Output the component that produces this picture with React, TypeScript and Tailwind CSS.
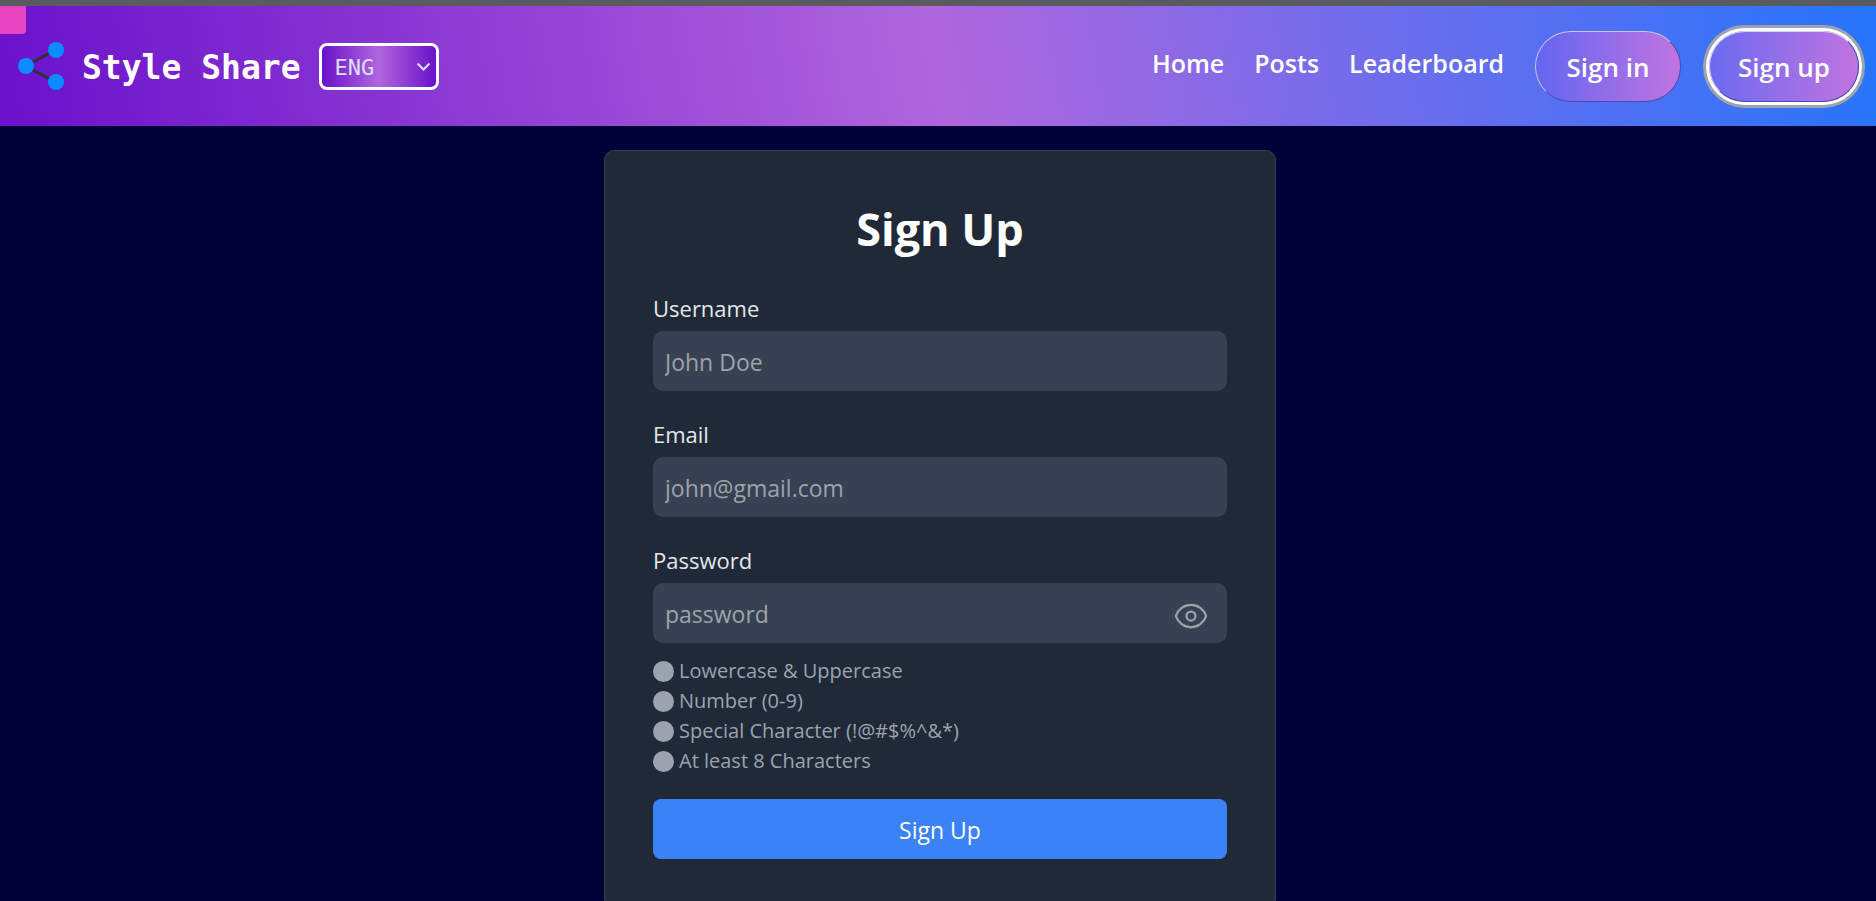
const RULES = [
  "Lowercase & Uppercase",
  "Number (0-9)",
  "Special Character (!@#$%^&*)",
  "At least 8 Characters",
];

function Logo() {
  return (
    <svg width="48" height="50" viewBox="0 0 48 50" fill="none">
      <path d="M8 25 L37 9 M8 25 L37 41" stroke="#2f2f3f" strokeWidth="3" />
      <circle cx="8" cy="25" r="8" fill="#0a8cff" />
      <circle cx="38" cy="9" r="8" fill="#0a8cff" />
      <circle cx="38" cy="41" r="8" fill="#0a8cff" />
    </svg>
  );
}

function EyeIcon() {
  return (
    <svg
      className="absolute right-[18px] top-[15px] text-[#9ca3af]"
      width="36"
      height="36"
      viewBox="0 0 24 24"
      fill="none"
      stroke="currentColor"
      strokeWidth="1.5"
    >
      <path d="M2.036 12.322a1.012 1.012 0 0 1 0-.639C3.423 7.51 7.36 4.5 12 4.5c4.638 0 8.573 3.007 9.963 7.178.07.207.07.431 0 .639C20.577 16.49 16.64 19.5 12 19.5c-4.638 0-8.573-3.007-9.963-7.178Z" />
      <path d="M15 12a3 3 0 1 1-6 0 3 3 0 0 1 6 0Z" />
    </svg>
  );
}

function Field({ label, placeholder }: { label: string; placeholder: string }) {
  return (
    <div className="mb-[29px]">
      <label className="mb-[9px] block text-[22px] leading-[28px] text-[#e5e7eb]">{label}</label>
      <input
        type="text"
        placeholder={placeholder}
        className="h-[60px] w-full rounded-[10px] bg-[#374151] px-3 pt-[2px] text-[23px] text-white outline-none placeholder:text-[#9ca3af]"
      />
    </div>
  );
}

export default function App() {
  return (
    <div className="relative h-screen overflow-hidden bg-[#000038] font-['Open_Sans','Noto_Sans',sans-serif]">
      <div className="h-[6px] bg-[#5a5b60]" />
      <div className="absolute left-0 top-[6px] z-10 h-[28px] w-[26px] rounded-br-[4px] bg-[#e844c0]" />

      <nav className="flex h-[120px] items-center justify-between bg-[linear-gradient(80deg,#6a11cb_0%,#b066dd_50%,#2575fc_100%)] pl-[18px] pr-[17px]">
        <div className="flex items-center">
          <Logo />
          <span className="ml-[16px] pt-[3px] font-['DejaVu_Sans_Mono',monospace] text-[33px] font-bold text-white">Style Share</span>
          <div className="relative ml-[18px]">
            <select className="h-[47px] w-[120px] appearance-none rounded-[8px] border-[3px] border-white bg-[linear-gradient(90deg,#6a11cb,#b066dd,#6a11cb)] pl-[13px] pt-[2px] font-['DejaVu_Sans_Mono',monospace] text-[22px] text-[#dbe0fb] outline-none">
              <option>ENG</option>
            </select>
            <svg className="absolute right-[8px] top-[19px]" width="15" height="9" viewBox="0 0 15 9" fill="none">
              <path d="M1.5 1.5 L7.5 7.5 L13.5 1.5" stroke="#dbe0fb" strokeWidth="2" />
            </svg>
          </div>
        </div>

        <div className="flex items-center">
          <a className="pb-[4px] text-[25px] font-semibold text-white">Home</a>
          <a className="ml-[30px] pb-[4px] text-[25px] font-semibold text-white">Posts</a>
          <a className="ml-[30px] pb-[4px] text-[25px] font-semibold text-white">Leaderboard</a>
          <button className="ml-[31px] h-[71px] w-[146px] rounded-full border border-t-[#c9c4f2] border-l-[#c9c4f2] border-r-[#4a4ab0] border-b-[#4a4ab0] bg-[linear-gradient(90deg,#6366f1,#c074e0)] pt-[3px] text-[26px] font-semibold text-white">
            Sign in
          </button>
          <button className="ml-[28px] h-[71px] w-[150px] rounded-full border border-t-[#d8d0f5] border-l-[#d8d0f5] border-r-[#4a4ab0] border-b-[#4a4ab0] bg-[linear-gradient(90deg,#6c6af0,#c074e0)] pt-[3px] text-[26px] font-semibold text-white shadow-[0_0_0_3px_#ffffff,0_0_0_6px_#9ca3af]">
            Sign up
          </button>
        </div>
      </nav>

      <div className="flex justify-center pl-[4px] pt-[24px]">
        <div className="w-[672px] rounded-[10px] border border-[#374151] bg-[#1f2937] p-[48px]">
          <h1 className="mb-[35px] text-center text-[45px] font-bold leading-[60px] text-white">Sign Up</h1>
          <Field label="Username" placeholder="John Doe" />
          <Field label="Email" placeholder="john@gmail.com" />
          <div>
            <label className="mb-[9px] block text-[22px] leading-[28px] text-[#e5e7eb]">Password</label>
            <div className="relative">
              <input
                type="password"
                placeholder="password"
                className="h-[60px] w-full rounded-[10px] bg-[#374151] px-3 pt-[2px] text-[23px] text-white outline-none placeholder:text-[#9ca3af]"
              />
              <EyeIcon />
            </div>
          </div>
          <ul className="mt-[13px]">
            {RULES.map((rule) => (
              <li key={rule} className="flex h-[30px] items-center text-[20px] text-[#9ca3af]">
                <span className="mr-[5px] h-[21px] w-[21px] rounded-full bg-[#9ca3af]" />
                {rule}
              </li>
            ))}
          </ul>
          <button className="mt-[23px] h-[60px] w-full rounded-[8px] bg-[#3b82f6] pt-[2px] text-[23px] font-medium text-white">
            Sign Up
          </button>
        </div>
      </div>
    </div>
  );
}
